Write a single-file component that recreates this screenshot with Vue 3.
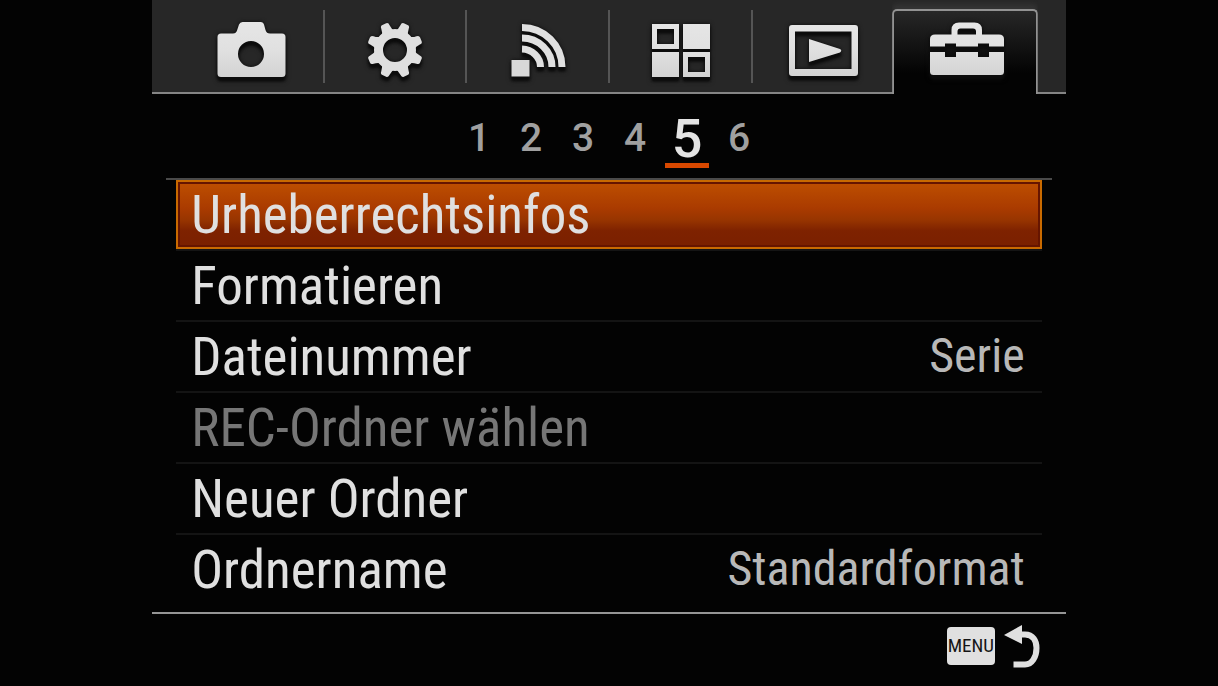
<script setup>
import { ref } from 'vue'

const tabs = [
  { id: 'camera', label: 'Kamera' },
  { id: 'gear', label: 'Benutzereinstellungen' },
  { id: 'wireless', label: 'Drahtlos' },
  { id: 'apps', label: 'Applikation' },
  { id: 'play', label: 'Wiedergabe' },
  { id: 'toolbox', label: 'Einstellung' }
]
const activeTab = ref('toolbox')
const activePage = ref(5)
const selected = ref(0)
const items = [
  { label: 'Urheberrechtsinfos' },
  { label: 'Formatieren' },
  { label: 'Dateinummer', value: 'Serie' },
  { label: 'REC-Ordner wählen', disabled: true },
  { label: 'Neuer Ordner' },
  { label: 'Ordnername', value: 'Standardformat' }
]
const teeth = [0, 1, 2, 3, 4, 5, 6, 7].map((n) => 22.5 + n * 45)
</script>

<template>
  <div class="screen">
    <main class="panel">
      <nav class="tabs">
        <button
          v-for="tab in tabs"
          :key="tab.id"
          type="button"
          class="tab"
          :class="{ active: tab.id === activeTab }"
          :aria-label="tab.label"
          @click="activeTab = tab.id"
        >
          <svg class="icon" viewBox="0 0 80 72" aria-hidden="true">
            <defs>
              <linearGradient id="metal" gradientUnits="userSpaceOnUse" x1="0" y1="6" x2="0" y2="62">
                <stop offset="0" stop-color="#e6e6e6" />
                <stop offset="0.5" stop-color="#e0e0e0" />
                <stop offset="1" stop-color="#d2d2d2" />
              </linearGradient>
            </defs>
            <path
              v-if="tab.id === 'camera'"
              fill="url(#metal)"
              fill-rule="evenodd"
              d="M7 17.5H19Q22.500 17.500 23.500 13L25 8.500Q26 6 28.500 6H47Q49.500 6 50 8.500L51.500 14Q52.500 17.500 56 17.500H68Q71.500 17.500 71.500 21V57.500Q71.500 61 68 61H7Q3.500 61 3.500 57.500V21Q3.500 17.500 7 17.500ZM37 25a13 13 0 1 0 0 26a13 13 0 1 0 0-26Z"
            />
            <g v-else-if="tab.id === 'gear'">
              <path
                v-for="angle in teeth"
                :key="angle"
                fill="#dfdfdf"
                :transform="`rotate(${angle} 39 34)`"
                d="M31.500 17Q34.500 13 34.500 9Q34.500 6 37 6H41Q43.500 6 43.500 9Q43.500 13 46.500 17Z"
              />
              <circle cx="39" cy="34" r="16.500" fill="none" stroke="#dfdfdf" stroke-width="9" />
            </g>
            <g v-else-if="tab.id === 'wireless'" fill="none" stroke="#e0e0e0" stroke-width="7">
              <path d="M23 11.500A40 39.500 0 0 1 63 51M23 22A30 29 0 0 1 53 51M23 33A19 18 0 0 1 41.500 51" />
              <rect x="12.500" y="44" width="18" height="16.500" fill="#d8d8d8" stroke="none" />
            </g>
            <path
              v-else-if="tab.id === 'apps'"
              fill="url(#metal)"
              fill-rule="evenodd"
              d="M11 8H38V33H11ZM16 13V28H33V13ZM42 8H69V33H42ZM11 36H38V61H11ZM42 36H69V61H42ZM47 41V56H64V41Z"
            />
            <path
              v-else-if="tab.id === 'play'"
              fill="url(#metal)"
              fill-rule="evenodd"
              d="M8 9H71Q74 9 74 12V57Q74 60 71 60H8Q5 60 5 57V12Q5 9 8 9ZM11 15.500V53H67.500V15.500ZM25 23L56 33Q58.500 34.700 56 36.500L25 46Z"
            />
            <path
              v-else
              fill="url(#metal)"
              fill-rule="evenodd"
              d="M9 18.500H25.500V14Q25.500 6.500 33 6.500H48.500Q56 6.500 56 14V18.500H73Q78 18.500 78 23V30.500H63V27.500H52V30.500H30V27.500H19V30.500H4V23Q4 18.500 9 18.500ZM34.500 12.500Q31.500 12.500 31.500 15.500V18.500H50V15.500Q50 12.500 47 12.500ZM4 36H19V41H30V36H52V41H63V36H78V55.500Q78 59 74.500 59H7.500Q4 59 4 55.500Z"
            />
          </svg>
        </button>
      </nav>

      <nav class="pages">
        <button
          v-for="n in 6"
          :key="n"
          type="button"
          class="page"
          :class="{ active: n === activePage }"
          @click="activePage = n"
        >{{ n }}</button>
      </nav>

      <ul class="menu">
        <li v-for="(item, i) in items" :key="item.label" class="row">
          <button
            type="button"
            class="item"
            :class="{ selected: i === selected }"
            :disabled="item.disabled"
            @click="selected = i"
          >
            <span class="label">{{ item.label }}</span>
            <span v-if="item.value" class="value">{{ item.value }}</span>
          </button>
        </li>
      </ul>

      <footer class="footer">
        <button type="button" class="back">
          <span class="key">MENU</span>
          <svg class="return" viewBox="0 0 36 44" aria-hidden="true">
            <path d="M17 10.500H21C29 10.500 32.500 17 32.500 24C32.500 33 28 40.500 21 40.500H9.500" fill="none" stroke="#e0e0e0" stroke-width="6" />
            <path d="M0 11L18 1V20Z" fill="#e0e0e0" />
          </svg>
        </button>
      </footer>
    </main>
  </div>
</template>

<style>
body {
  margin: 0;
  background: #030303;
}
</style>

<style scoped>
.screen {
  min-height: 100vh;
  background: #030303;
  font-family: "Roboto Condensed", "Liberation Sans Narrow", "Liberation Sans", sans-serif;
  color: #e0e0e0;
}
.panel {
  width: 75%;
  min-height: 100vh;
  margin: 0 auto;
  display: flex;
  flex-direction: column;
}
button {
  margin: 0;
  border: 0;
  padding: 0;
  background: none;
  color: inherit;
  font-family: inherit;
}
.tabs {
  display: grid;
  grid-template-columns: repeat(6, 1fr);
  height: 92px;
  padding: 0 28px 0 30px;
  background: #272727;
  border-bottom: 2px solid #858585;
}
.tab {
  display: flex;
  justify-content: center;
  align-items: flex-start;
  padding-top: 16px;
  background: linear-gradient(#555, #555) right 10px / 2px 73px no-repeat;
}
.tab:nth-child(5) {
  background: none;
}
.tab.active {
  margin: 9px 0 -2px -3px;
  padding: 5px 0 0 3px;
  border: 2px solid #929292;
  border-bottom: 0;
  border-radius: 5px 5px 0 0;
  background: linear-gradient(#272727, #030303 75%);
  box-shadow: 0 -5px 5px #333;
  clip-path: inset(-9px 0 0 0);
}
.icon {
  width: 80px;
  height: 72px;
  overflow: visible;
  filter: drop-shadow(0 4px 1px #0c0c0c) drop-shadow(0 0 2px #0c0c0c);
}
.pages {
  display: flex;
  justify-content: center;
  gap: 8px;
  height: 84px;
  box-sizing: border-box;
  padding-top: 14px;
}
.page {
  width: 44px;
  height: 60px;
  box-sizing: border-box;
  padding-top: 6px;
  border-bottom: 5px solid transparent;
  font-family: Roboto, "Liberation Sans", sans-serif;
  font-size: 39px;
  font-weight: 500;
  line-height: 49px;
  color: #a0a0a0;
}
.page.active {
  border-bottom-color: #d84800;
  font-size: 54px;
  color: #e4e4e4;
}
.menu {
  list-style: none;
  margin: 0 14px;
  padding: 0 10px;
  border-top: 2px solid #4a4a4a;
}
.row {
  height: 71px;
  box-sizing: border-box;
  border-bottom: 2px solid #141414;
}
.row:last-child {
  border-bottom: 0;
}
.item {
  display: flex;
  justify-content: space-between;
  align-items: center;
  width: 100%;
  height: 69px;
  box-sizing: border-box;
  padding: 2px 17px 0 15px;
  text-align: left;
  white-space: nowrap;
}
.item.selected {
  background: linear-gradient(#be4f00, #aa3b00 40%, #983500 58%, #7e2200 75%, #7a2000);
  border: 2px solid #c96a00;
  padding: 2px 15px 0 13px;
  box-shadow: inset 0 0 0 2px #661500;
}
.label {
  font-size: 53px;
  line-height: 67px;
}
.value {
  font-size: 48px;
  line-height: 60px;
  padding-bottom: 4px;
  color: #b8b8b8;
}
.item:disabled {
  color: #767676;
}
.footer {
  display: flex;
  justify-content: flex-end;
  margin-top: 6px;
  padding: 10px 26px 0 0;
  border-top: 2px solid #959595;
}
.back {
  display: flex;
  align-items: center;
  gap: 9px;
}
.key {
  width: 48px;
  border-radius: 4px;
  background: #e0e0e0;
  color: #151515;
  font-size: 19px;
  line-height: 38px;
  text-align: center;
}
.return {
  width: 36px;
  height: 44px;
}
</style>
